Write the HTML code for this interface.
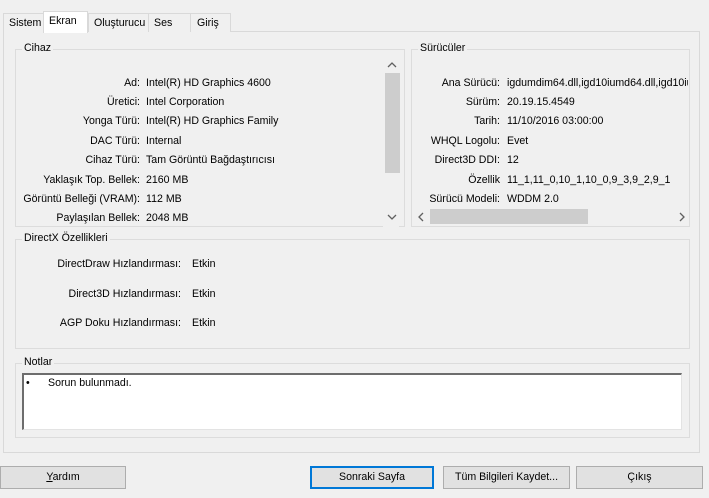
<!DOCTYPE html>
<html><head><meta charset="utf-8"><style>
*{margin:0;padding:0;box-sizing:border-box}
body{width:709px;height:498px;background:#f0f0f0;font-family:"Liberation Sans",sans-serif;font-size:10.6px;color:#000;position:relative;overflow:hidden}
.a{position:absolute;white-space:nowrap}
.tab{position:absolute;top:13px;height:19px;border:1px solid #d9d9d9;border-bottom:none;background:#f0f0f0;padding:3px 0 0 5px}
.grp{position:absolute;border:1px solid #dcdcdc}
.gt{position:absolute;top:-8px;left:6px;background:#f0f0f0;padding:0 2px}
.l{position:absolute;text-align:right;white-space:nowrap}
.v{position:absolute;white-space:nowrap}
.btn{position:absolute;top:466px;height:23px;background:#e1e1e1;border:1px solid #adadad;text-align:center;line-height:21px}
svg{position:absolute}
</style></head><body>
<div class="a" style="left:3px;top:31px;width:697px;height:422px;background:#f0f0f0;border:1px solid #d9d9d9"></div>
<div class="tab" style="left:3px;width:41px">Sistem</div>
<div class="tab" style="left:88px;width:61px">Oluşturucu</div>
<div class="tab" style="left:148px;width:43px">Ses</div>
<div class="tab" style="left:190px;width:41px;padding-left:6px">Giriş</div>
<div class="tab" style="left:43px;top:11px;width:45px;height:22px;background:#fff;padding-top:3px">Ekran</div>

<div class="grp" style="left:15px;top:49px;width:390px;height:178px">
<div class="gt">Cihaz</div>
<div class="a" style="left:367px;top:7px;width:16px;height:170px;background:#f0f0f0"></div>
<div class="a" style="left:369px;top:23px;width:15px;height:100px;background:#cdcdcd"></div>
<svg style="left:371px;top:12px" width="10" height="6"><path d="M1 5 L5 1 L9 5" fill="none" stroke="#606060" stroke-width="1.3"/></svg>
<svg style="left:371px;top:164px" width="10" height="6"><path d="M1 1 L5 5 L9 1" fill="none" stroke="#606060" stroke-width="1.3"/></svg>
</div>
<div class="l" style="right:569px;top:77px">Ad:</div><div class="v" style="left:146px;top:77px">Intel(R) HD Graphics 4600</div>
<div class="l" style="right:569px;top:96px">Üretici:</div><div class="v" style="left:146px;top:96px">Intel Corporation</div>
<div class="l" style="right:569px;top:115px">Yonga Türü:</div><div class="v" style="left:146px;top:115px">Intel(R) HD Graphics Family</div>
<div class="l" style="right:569px;top:135px">DAC Türü:</div><div class="v" style="left:146px;top:135px">Internal</div>
<div class="l" style="right:569px;top:154px">Cihaz Türü:</div><div class="v" style="left:146px;top:154px">Tam Görüntü Bağdaştırıcısı</div>
<div class="l" style="right:569px;top:174px">Yaklaşık Top. Bellek:</div><div class="v" style="left:146px;top:174px">2160 MB</div>
<div class="l" style="right:569px;top:193px">Görüntü Belleği (VRAM):</div><div class="v" style="left:146px;top:193px">112 MB</div>
<div class="l" style="right:569px;top:212px;height:13px;overflow:hidden">Paylaşılan Bellek:</div><div class="v" style="left:146px;top:212px;height:13px;overflow:hidden">2048 MB</div>

<div class="grp" style="left:411px;top:49px;width:279px;height:178px">
<div class="gt">Sürücüler</div>
<div class="a" style="left:1px;top:158px;width:276px;height:17px;background:#f0f0f0"></div>
<div class="a" style="left:18px;top:159px;width:158px;height:15px;background:#cdcdcd"></div>
<svg style="left:6px;top:162px" width="6" height="10"><path d="M5 1 L1 5 L5 9" fill="none" stroke="#606060" stroke-width="1.3"/></svg>
<svg style="left:267px;top:162px" width="6" height="10"><path d="M1 1 L5 5 L1 9" fill="none" stroke="#606060" stroke-width="1.3"/></svg>
</div>
<div style="position:absolute;left:412px;top:70px;width:276px;height:136px;overflow:hidden">
<div class="l" style="right:188px;top:7px">Ana Sürücü:</div><div class="v" style="left:95px;top:7px">igdumdim64.dll,igd10iumd64.dll,igd10iumd64.dll</div>
<div class="l" style="right:188px;top:26px">Sürüm:</div><div class="v" style="left:95px;top:26px">20.19.15.4549</div>
<div class="l" style="right:188px;top:45px">Tarih:</div><div class="v" style="left:95px;top:45px">11/10/2016 03:00:00</div>
<div class="l" style="right:188px;top:65px">WHQL Logolu:</div><div class="v" style="left:95px;top:65px">Evet</div>
<div class="l" style="right:188px;top:84px">Direct3D DDI:</div><div class="v" style="left:95px;top:84px">12</div>
<div class="l" style="right:188px;top:104px">Özellik</div><div class="v" style="left:95px;top:104px">11_1,11_0,10_1,10_0,9_3,9_2,9_1</div>
<div class="l" style="right:188px;top:123px">Sürücü Modeli:</div><div class="v" style="left:95px;top:123px">WDDM 2.0</div>
</div>

<div class="grp" style="left:15px;top:239px;width:675px;height:110px">
<div class="gt">DirectX Özellikleri</div>
</div>
<div class="l" style="right:528px;top:258px">DirectDraw Hızlandırması:</div><div class="v" style="left:192px;top:258px">Etkin</div>
<div class="l" style="right:528px;top:288px">Direct3D Hızlandırması:</div><div class="v" style="left:192px;top:288px">Etkin</div>
<div class="l" style="right:528px;top:317px">AGP Doku Hızlandırması:</div><div class="v" style="left:192px;top:317px">Etkin</div>

<div class="grp" style="left:15px;top:363px;width:675px;height:75px">
<div class="gt">Notlar</div>
</div>
<div class="a" style="left:22px;top:373px;width:660px;height:57px;background:#fff;border:1px solid #e3e3e3;border-top:2px solid #6d6d6d;border-left:2px solid #6d6d6d"></div>
<div class="a" style="left:26px;top:377px">•</div>
<div class="a" style="left:48px;top:377px">Sorun bulunmadı.</div>

<div class="btn" style="left:0;width:126px"><u>Y</u>ardım</div>
<div class="btn" style="left:310px;width:124px;border:2px solid #0078d7;line-height:19px">Sonraki Sayfa</div>
<div class="btn" style="left:443px;width:127px">Tüm Bilgileri Kaydet...</div>
<div class="btn" style="left:576px;width:127px">Çıkış</div>
</body></html>
